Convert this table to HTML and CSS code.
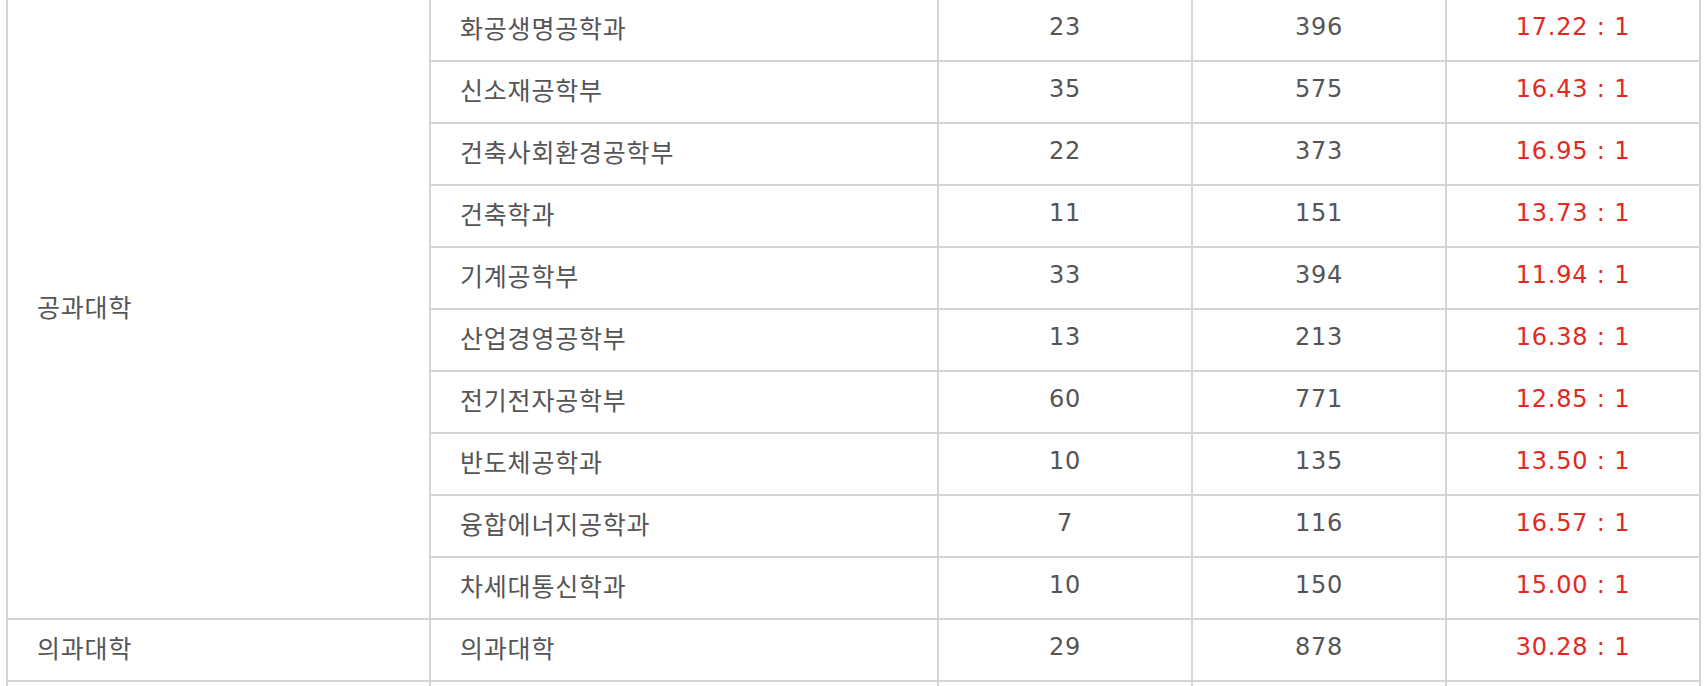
FILE: index.html
```html
<!DOCTYPE html>
<html lang="ko">
<head>
<meta charset="utf-8">
<title>경쟁률</title>
<link rel="stylesheet" href="styles.css">
</head>
<body>
<div class="wrap">
<table class="rate-table">
  <colgroup>
    <col class="c-college">
    <col class="c-dept">
    <col class="c-num">
    <col class="c-num">
    <col class="c-num">
  </colgroup>
  <tbody>
    <tr>
      <td class="college" rowspan="10">공과대학</td>
      <td class="dept">화공생명공학과</td><td class="num">23</td><td class="num">396</td><td class="ratio">17.22 : 1</td>
    </tr>
    <tr><td class="dept">신소재공학부</td><td class="num">35</td><td class="num">575</td><td class="ratio">16.43 : 1</td></tr>
    <tr><td class="dept">건축사회환경공학부</td><td class="num">22</td><td class="num">373</td><td class="ratio">16.95 : 1</td></tr>
    <tr><td class="dept">건축학과</td><td class="num">11</td><td class="num">151</td><td class="ratio">13.73 : 1</td></tr>
    <tr><td class="dept">기계공학부</td><td class="num">33</td><td class="num">394</td><td class="ratio">11.94 : 1</td></tr>
    <tr><td class="dept">산업경영공학부</td><td class="num">13</td><td class="num">213</td><td class="ratio">16.38 : 1</td></tr>
    <tr><td class="dept">전기전자공학부</td><td class="num">60</td><td class="num">771</td><td class="ratio">12.85 : 1</td></tr>
    <tr><td class="dept">반도체공학과</td><td class="num">10</td><td class="num">135</td><td class="ratio">13.50 : 1</td></tr>
    <tr><td class="dept">융합에너지공학과</td><td class="num">7</td><td class="num">116</td><td class="ratio">16.57 : 1</td></tr>
    <tr><td class="dept">차세대통신학과</td><td class="num">10</td><td class="num">150</td><td class="ratio">15.00 : 1</td></tr>
    <tr>
      <td class="college">의과대학</td>
      <td class="dept">의과대학</td><td class="num">29</td><td class="num">878</td><td class="ratio">30.28 : 1</td>
    </tr>
    <tr class="next-row">
      <td class="college"></td><td class="dept"></td><td class="num"></td><td class="num"></td><td class="ratio"></td>
    </tr>
  </tbody>
</table>
</div>
</body>
</html>
```

FILE: styles.css
```css
html, body {
  margin: 0;
  padding: 0;
  background: #ffffff;
}

.wrap {
  padding: 0 0 0 6px;
  margin-top: -2px;
}

.rate-table {
  width: 1692px;
  border-collapse: collapse;
  table-layout: fixed;
  font-family: "DejaVu Sans", "Noto Sans CJK KR", sans-serif;
  font-size: 24px;
  letter-spacing: 0.8px;
  color: #555555;
}

.c-college { width: 423px; }
.c-dept { width: 508px; }
.c-num { width: 254px; }

.rate-table td {
  border: 2px solid #d5d5d5;
  height: 62px;
  padding: 0 30px 7px 30px;
  vertical-align: middle;
  line-height: 30px;
  box-sizing: border-box;
}

.rate-table td.college,
.rate-table td.dept {
  text-align: left;
  font-family: "Noto Sans CJK KR", sans-serif;
  font-size: 25px;
  letter-spacing: 0.8px;
  padding-left: 29px;
}

.rate-table td.num,
.rate-table td.ratio {
  text-align: center;
  padding-left: 0;
  padding-right: 0;
}

.rate-table td.ratio {
  color: #e3291f;
}
```
